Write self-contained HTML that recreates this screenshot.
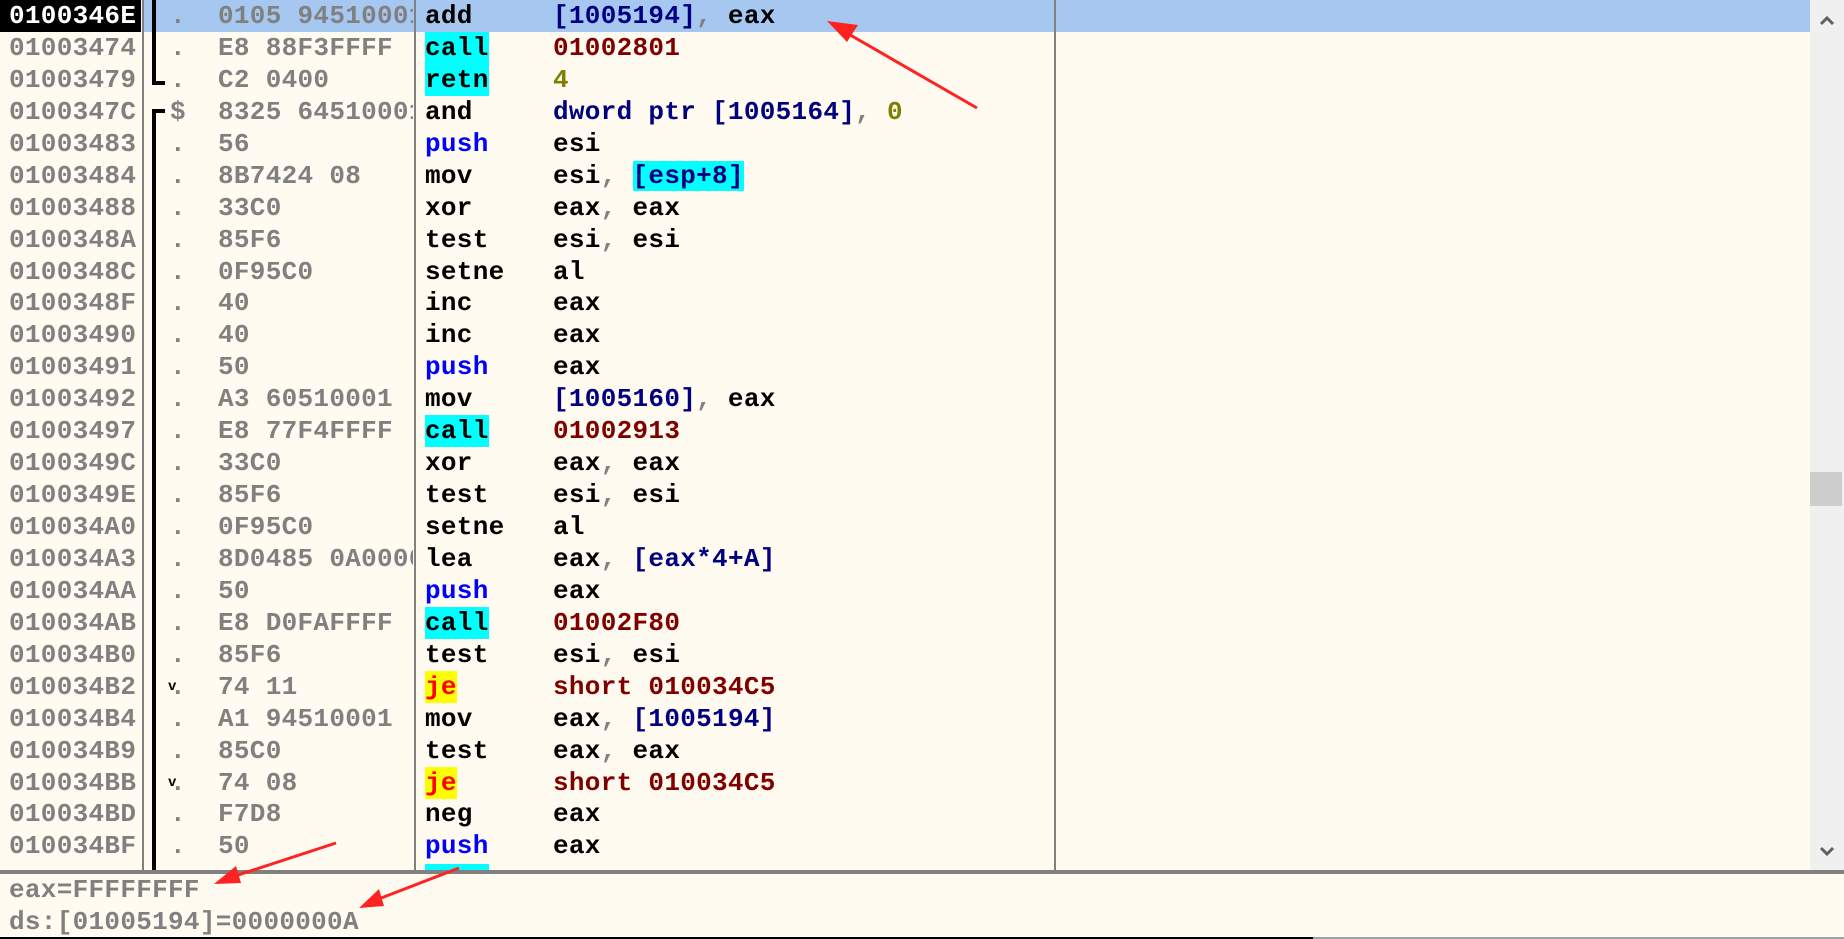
<!DOCTYPE html>
<html><head><meta charset="utf-8">
<style>
html,body{margin:0;padding:0;}
body{width:1844px;height:939px;background:#fffbf0;position:relative;overflow:hidden;
font-family:"Liberation Mono","DejaVu Sans Mono",monospace;font-size:26px;font-weight:bold;letter-spacing:0.3px;}
.r{position:absolute;left:0;width:1810px;height:32px;line-height:32px;white-space:nowrap;}
.r span{position:absolute;top:0;}
.a{left:9px;color:#808080;}
.d{left:170px;color:#808080;}
.h{left:218px;color:#808080;width:195px;overflow:hidden;}
.m{left:425px;color:#000;}
.o{left:553px;color:#000;}
.cy{background:#00ffff;}
.ye{background:#ffff00;color:#ff0000 !important;}
.bl{color:#0000ff !important;}
.nv{color:#000080;}
.dr{color:#800000;}
.ol{color:#808000;}
.g{color:#808080;}
.v{font-size:14px;position:relative;top:6px;left:-2px;color:#000;}
.line{position:absolute;}
</style></head><body>
<!-- highlight row -->
<div style="position:absolute;left:142px;top:0;width:1668px;height:32px;background:#a6c8f0"></div>
<div style="position:absolute;left:0;top:0;width:141px;height:32px;background:#000"></div>

<div class="r" style="top:0px"><span class="a" style="color:#fff">0100346E</span><span class="d">.</span><span class="h">0105 94510001</span><span class="m">add</span><span class="o"><span class="nv" style="position:static">[1005194]</span><span class="g" style="position:static">,</span> eax</span></div>
<div class="r" style="top:32px"><span class="a">01003474</span><span class="d">.</span><span class="h">E8 88F3FFFF</span><span class="m cy">call</span><span class="o dr">01002801</span></div>
<div class="r" style="top:64px"><span class="a">01003479</span><span class="d">.</span><span class="h">C2 0400</span><span class="m cy">retn</span><span class="o ol">4</span></div>
<div class="r" style="top:96px"><span class="a">0100347C</span><span class="d">$</span><span class="h">8325 64510001</span><span class="m">and</span><span class="o"><span class="nv" style="position:static">dword ptr [1005164]</span><span class="g" style="position:static">,</span> <span class="ol" style="position:static">0</span></span></div>
<div class="r" style="top:128px"><span class="a">01003483</span><span class="d">.</span><span class="h">56</span><span class="m bl">push</span><span class="o">esi</span></div>
<div class="r" style="top:160px"><span class="a">01003484</span><span class="d">.</span><span class="h">8B7424 08</span><span class="m">mov</span><span class="o">esi<span class="g" style="position:static">,</span> <span class="nv cy" style="position:static">[esp+8]</span></span></div>
<div class="r" style="top:192px"><span class="a">01003488</span><span class="d">.</span><span class="h">33C0</span><span class="m">xor</span><span class="o">eax<span class="g" style="position:static">,</span> eax</span></div>
<div class="r" style="top:224px"><span class="a">0100348A</span><span class="d">.</span><span class="h">85F6</span><span class="m">test</span><span class="o">esi<span class="g" style="position:static">,</span> esi</span></div>
<div class="r" style="top:256px"><span class="a">0100348C</span><span class="d">.</span><span class="h">0F95C0</span><span class="m">setne</span><span class="o">al</span></div>
<div class="r" style="top:287px"><span class="a">0100348F</span><span class="d">.</span><span class="h">40</span><span class="m">inc</span><span class="o">eax</span></div>
<div class="r" style="top:319px"><span class="a">01003490</span><span class="d">.</span><span class="h">40</span><span class="m">inc</span><span class="o">eax</span></div>
<div class="r" style="top:351px"><span class="a">01003491</span><span class="d">.</span><span class="h">50</span><span class="m bl">push</span><span class="o">eax</span></div>
<div class="r" style="top:383px"><span class="a">01003492</span><span class="d">.</span><span class="h">A3 60510001</span><span class="m">mov</span><span class="o"><span class="nv" style="position:static">[1005160]</span><span class="g" style="position:static">,</span> eax</span></div>
<div class="r" style="top:415px"><span class="a">01003497</span><span class="d">.</span><span class="h">E8 77F4FFFF</span><span class="m cy">call</span><span class="o dr">01002913</span></div>
<div class="r" style="top:447px"><span class="a">0100349C</span><span class="d">.</span><span class="h">33C0</span><span class="m">xor</span><span class="o">eax<span class="g" style="position:static">,</span> eax</span></div>
<div class="r" style="top:479px"><span class="a">0100349E</span><span class="d">.</span><span class="h">85F6</span><span class="m">test</span><span class="o">esi<span class="g" style="position:static">,</span> esi</span></div>
<div class="r" style="top:511px"><span class="a">010034A0</span><span class="d">.</span><span class="h">0F95C0</span><span class="m">setne</span><span class="o">al</span></div>
<div class="r" style="top:543px"><span class="a">010034A3</span><span class="d">.</span><span class="h">8D0485 0A000000</span><span class="m">lea</span><span class="o">eax<span class="g" style="position:static">,</span> <span class="nv" style="position:static">[eax*4+A]</span></span></div>
<div class="r" style="top:575px"><span class="a">010034AA</span><span class="d">.</span><span class="h">50</span><span class="m bl">push</span><span class="o">eax</span></div>
<div class="r" style="top:607px"><span class="a">010034AB</span><span class="d">.</span><span class="h">E8 D0FAFFFF</span><span class="m cy">call</span><span class="o dr">01002F80</span></div>
<div class="r" style="top:639px"><span class="a">010034B0</span><span class="d">.</span><span class="h">85F6</span><span class="m">test</span><span class="o">esi<span class="g" style="position:static">,</span> esi</span></div>
<div class="r" style="top:671px"><span class="a">010034B2</span><span class="d">.<span class="v">v</span></span><span class="h">74 11</span><span class="m ye">je</span><span class="o dr">short 010034C5</span></div>
<div class="r" style="top:703px"><span class="a">010034B4</span><span class="d">.</span><span class="h">A1 94510001</span><span class="m">mov</span><span class="o">eax<span class="g" style="position:static">,</span> <span class="nv" style="position:static">[1005194]</span></span></div>
<div class="r" style="top:735px"><span class="a">010034B9</span><span class="d">.</span><span class="h">85C0</span><span class="m">test</span><span class="o">eax<span class="g" style="position:static">,</span> eax</span></div>
<div class="r" style="top:767px"><span class="a">010034BB</span><span class="d">.<span class="v">v</span></span><span class="h">74 08</span><span class="m ye">je</span><span class="o dr">short 010034C5</span></div>
<div class="r" style="top:798px"><span class="a">010034BD</span><span class="d">.</span><span class="h">F7D8</span><span class="m">neg</span><span class="o">eax</span></div>
<div class="r" style="top:830px"><span class="a">010034BF</span><span class="d">.</span><span class="h">50</span><span class="m bl">push</span><span class="o">eax</span></div>
<div style="position:absolute;left:425px;top:864px;width:64px;height:7px;background:#00ffff"></div>

<!-- separators -->
<div class="line" style="left:142px;top:0;width:2px;height:871px;background:#808080"></div>
<div class="line" style="left:414px;top:0;width:2px;height:871px;background:#808080"></div>
<div class="line" style="left:1054px;top:0;width:2px;height:871px;background:#808080"></div>
<!-- brackets -->
<div class="line" style="left:152px;top:0;width:4px;height:85px;background:#000"></div>
<div class="line" style="left:152px;top:81px;width:13px;height:4px;background:#000"></div>
<div class="line" style="left:152px;top:109px;width:4px;height:762px;background:#000"></div>
<div class="line" style="left:152px;top:109px;width:13px;height:4px;background:#000"></div>

<!-- scrollbar -->
<div class="line" style="left:1810px;top:0;width:34px;height:871px;background:#f0f0f0"></div>
<div class="line" style="left:1810px;top:472px;width:32px;height:34px;background:#cdcdcd"></div>
<svg style="position:absolute;left:1810px;top:0" width="34" height="871">
<path d="M11 24 L17 18 L23 24" stroke="#606060" stroke-width="3" fill="none"/>
<path d="M11 848 L17 854 L23 848" stroke="#606060" stroke-width="3" fill="none"/>
</svg>

<!-- bottom panel -->
<div class="line" style="left:0;top:870px;width:1844px;height:4px;background:#808080"></div>
<div style="position:absolute;left:9px;top:874px;line-height:32px;color:#808080;white-space:nowrap">eax=FFFFFFFF<br>ds:[01005194]=0000000A</div>
<div class="line" style="left:0;top:937px;width:1313px;height:2px;background:#000"></div>
<div class="line" style="left:1313px;top:937px;width:531px;height:2px;background:#a0a0a0"></div>

<!-- arrows -->
<svg style="position:absolute;left:0;top:0" width="1844" height="939">
<g fill="#f22" stroke="#f22">
<line x1="977" y1="108" x2="845" y2="32" stroke-width="3"/>
<polygon points="827,21 858,25 847,42" stroke="none"/>
<line x1="336" y1="843" x2="232" y2="877" stroke-width="3"/>
<polygon points="214,884 236,866 241,883" stroke="none"/>
<line x1="459" y1="868" x2="376" y2="900" stroke-width="3"/>
<polygon points="359,908 379,889 384,906" stroke="none"/>
</g>
</svg>
</body></html>
